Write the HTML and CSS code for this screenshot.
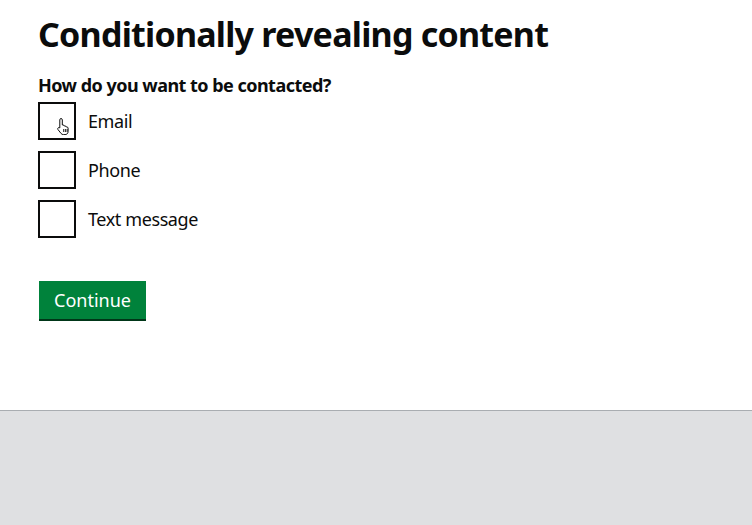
FILE: index.html
```html
<!DOCTYPE html>
<html lang="en">
<head>
    <meta charset="UTF-8">
    <meta name="viewport" content="width=device-width, initial-scale=1.0">
    <title>Conditionally revealing content</title>
    <link rel="stylesheet" href="styles.css">
</head>
<body>
    <main class="page">
        <h1 class="heading">Conditionally revealing content</h1>

        <fieldset class="fieldset">
            <legend class="legend">How do you want to be contacted?</legend>
            <div class="checkboxes">
                <label class="checkbox">
                    <span class="box">
                        <svg class="cursor" width="16" height="18" viewBox="0 0 16 18">
                            <path d="M5 1.5c.8 0 1.3.6 1.3 1.3V8l.6-.1c.8 0 1.3.5 1.3 1.1l.7-.1c.8 0 1.2.5 1.3 1.1l.6-.1c.8 0 1.3.6 1.3 1.3v3.4c0 1.8-1.3 3-3 3H7.4c-1 0-1.7-.4-2.3-1.1L2 12.6c-.5-.6-.4-1.4.2-1.8.5-.4 1.2-.3 1.6.1V2.8c0-.7.5-1.3 1.2-1.3z" fill="#fff" stroke="#0b0c0c" stroke-width="1" stroke-linejoin="round"/>
                            <path d="M7.7 12v3M9.4 12v3M11.1 12v3" stroke="#0b0c0c" stroke-width="0.9"/>
                        </svg>
                    </span>
                    <span class="text">Email</span>
                </label>
                <label class="checkbox">
                    <span class="box"></span>
                    <span class="text">Phone</span>
                </label>
                <label class="checkbox">
                    <span class="box"></span>
                    <span class="text">Text message</span>
                </label>
            </div>
        </fieldset>

        <button class="button">Continue</button>
    </main>

    <footer class="footer"></footer>
</body>
</html>
```

FILE: styles.css
```css
* {
    margin: 0;
    padding: 0;
    box-sizing: border-box;
}

body {
    font-family: 'Noto Sans', 'Liberation Sans', sans-serif;
    color: #0b0c0c;
    background: #fff;
}

.page {
    padding: 10px 38px 0;
    height: 410px;
}

.heading {
    font-size: 34px;
    font-weight: 700;
    line-height: 48px;
    letter-spacing: -0.76px;
    margin-bottom: 15px;
}

.fieldset {
    border: none;
}

.legend {
    font-size: 18px;
    font-weight: 700;
    line-height: 24px;
    letter-spacing: -0.52px;
    margin-bottom: 5px;
}

.checkbox {
    display: flex;
    align-items: center;
    margin-bottom: 11px;
    cursor: pointer;
}

.box {
    position: relative;
    width: 38px;
    height: 38px;
    border: 2px solid #0b0c0c;
    flex-shrink: 0;
}

.cursor {
    position: absolute;
    left: 16px;
    top: 13px;
}

.text {
    font-size: 18px;
    letter-spacing: -0.4px;
    padding-left: 12px;
}

.button {
    margin-top: 32px;
    margin-left: 1px;
    font-family: inherit;
    font-size: 18px;
    color: #fff;
    background: #00823b;
    border: none;
    box-shadow: 0 2px 0 #003618;
    padding: 0 15px;
    height: 38px;
    cursor: pointer;
}

.footer {
    border-top: 1px solid #a9adb1;
    background: #dfe0e2;
    height: 115px;
}
```
